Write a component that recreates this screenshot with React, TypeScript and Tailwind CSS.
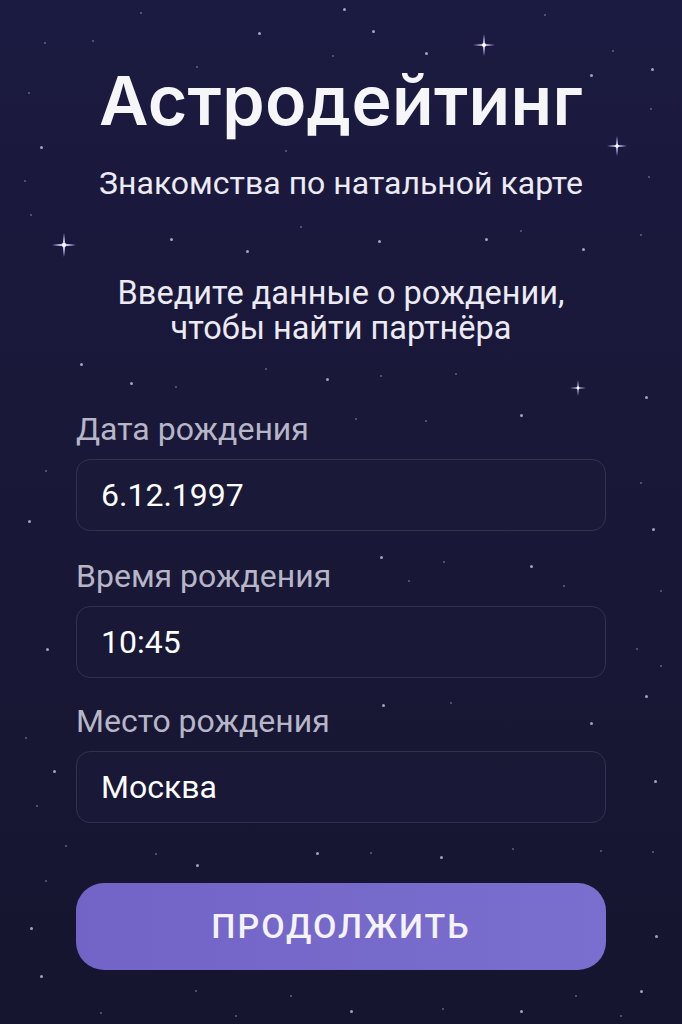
import React from "react";

const dots: [number, number, number][] = [
  [343, 8, 2], [140, 12, 1], [92, 40, 1], [258, 32, 2], [372, 30, 2], [425, 52, 2], [544, 14, 1],
  [651, 68, 2], [44, 42, 1], [196, 66, 1], [332, 55, 1], [612, 50, 1], [590, 74, 2], [28, 92, 1],
  [650, 108, 1], [40, 146, 2], [285, 150, 1], [24, 180, 1], [648, 176, 1], [170, 238, 2],
  [246, 250, 2], [378, 240, 2], [485, 238, 2], [582, 248, 2], [640, 234, 1], [30, 214, 1],
  [520, 230, 1], [300, 226, 1], [80, 363, 2], [130, 382, 2], [175, 386, 1], [265, 368, 1],
  [326, 378, 2], [380, 375, 1], [455, 373, 1], [520, 414, 2], [645, 396, 2], [355, 418, 1],
  [425, 420, 1], [45, 470, 1], [28, 520, 2], [640, 482, 1], [652, 528, 2], [380, 556, 2],
  [443, 561, 1], [530, 565, 2], [408, 580, 1], [563, 585, 1], [660, 590, 1], [46, 648, 2],
  [636, 648, 1], [660, 665, 1], [645, 695, 2], [382, 704, 2], [450, 702, 1], [590, 722, 2],
  [25, 737, 1], [53, 770, 2], [654, 780, 2], [36, 805, 1], [65, 845, 1], [155, 853, 1],
  [196, 864, 2], [316, 852, 2], [370, 852, 1], [440, 856, 2], [512, 848, 1], [600, 850, 1],
  [652, 851, 1], [45, 880, 1], [655, 935, 2], [30, 927, 2], [40, 975, 2], [195, 990, 1],
  [290, 995, 1], [350, 1010, 2], [442, 1008, 1], [520, 1010, 2], [575, 995, 1], [640, 990, 2],
  [100, 1012, 1], [235, 1015, 1], [620, 1015, 1],
];

const sparkles: [number, number, number][] = [
  [484, 45, 22],
  [617, 146, 20],
  [64, 245, 24],
  [578, 388, 16],
];

function Sparkle({ x, y, s }: { x: number; y: number; s: number }) {
  return (
    <svg
      className="absolute"
      style={{ left: x - s / 2, top: y - s / 2, width: s, height: s }}
      viewBox="0 0 20 20"
    >
      <path
        d="M10 0 L11 9 L20 10 L11 11 L10 20 L9 11 L0 10 L9 9 Z"
        fill="#c9c0ff"
      />
      <circle cx="10" cy="10" r="1.8" fill="#ffffff" />
    </svg>
  );
}

function Field({ label, value, top }: { label: string; value: string; top: string }) {
  return (
    <div className={top}>
      <div className="text-[32px] leading-[36px] text-[#b7b6c7]">{label}</div>
      <div className="mt-[12px] flex h-[72px] items-center rounded-[14px] border border-[#33324e] bg-[#1b1a38]/60 px-[24px]">
        <span className="text-[32px] leading-[36px] text-white">{value}</span>
      </div>
    </div>
  );
}

export default function App() {
  return (
    <div
      className="relative h-[1024px] w-full overflow-hidden bg-gradient-to-b from-[#1b1a40] to-[#16152f]"
      style={{ fontFamily: "Roboto, 'Noto Sans', sans-serif" }}
    >
      {/* star field */}
      {dots.map(([x, y, r], i) => (
        <span
          key={i}
          className="absolute rounded-full bg-[#cfd0f0]"
          style={{ left: x, top: y, width: r + 1, height: r + 1, opacity: r > 1 ? 0.75 : 0.4 }}
        />
      ))}
      {sparkles.map(([x, y, s], i) => (
        <Sparkle key={i} x={x} y={y} s={s} />
      ))}

      <div className="relative mx-auto w-[530px] pt-[64px]">
        <h1
          className="text-center text-[68px] font-semibold leading-[72px] tracking-[0.3px] text-[#f6f5f8]"
          style={{ fontFamily: "Inter, 'Liberation Sans', sans-serif" }}
        >
          Астродейтинг
        </h1>
        <p className="mt-[29px] text-center text-[32px] leading-[36px] text-[#eceaf2]">
          Знакомства по натальной карте
        </p>
        <p className="-mx-[20px] mt-[75px] text-center text-[32.5px] leading-[35px] text-[#eceaf2]">
          Введите данные о рождении,
          <br />
          чтобы найти партнёра
        </p>

        <Field label="Дата рождения" value="6.12.1997" top="mt-[65px]" />
        <Field label="Время рождения" value="10:45" top="mt-[27px]" />
        <Field label="Место рождения" value="Москва" top="mt-[25px]" />

        <button className="mt-[60px] flex h-[87px] w-full items-center justify-center rounded-[28px] bg-gradient-to-r from-[#7164c6] to-[#7a6ecf] text-[34px] font-medium tracking-[2px] text-[#f4f2fb]">
          ПРОДОЛЖИТЬ
        </button>
      </div>
    </div>
  );
}
